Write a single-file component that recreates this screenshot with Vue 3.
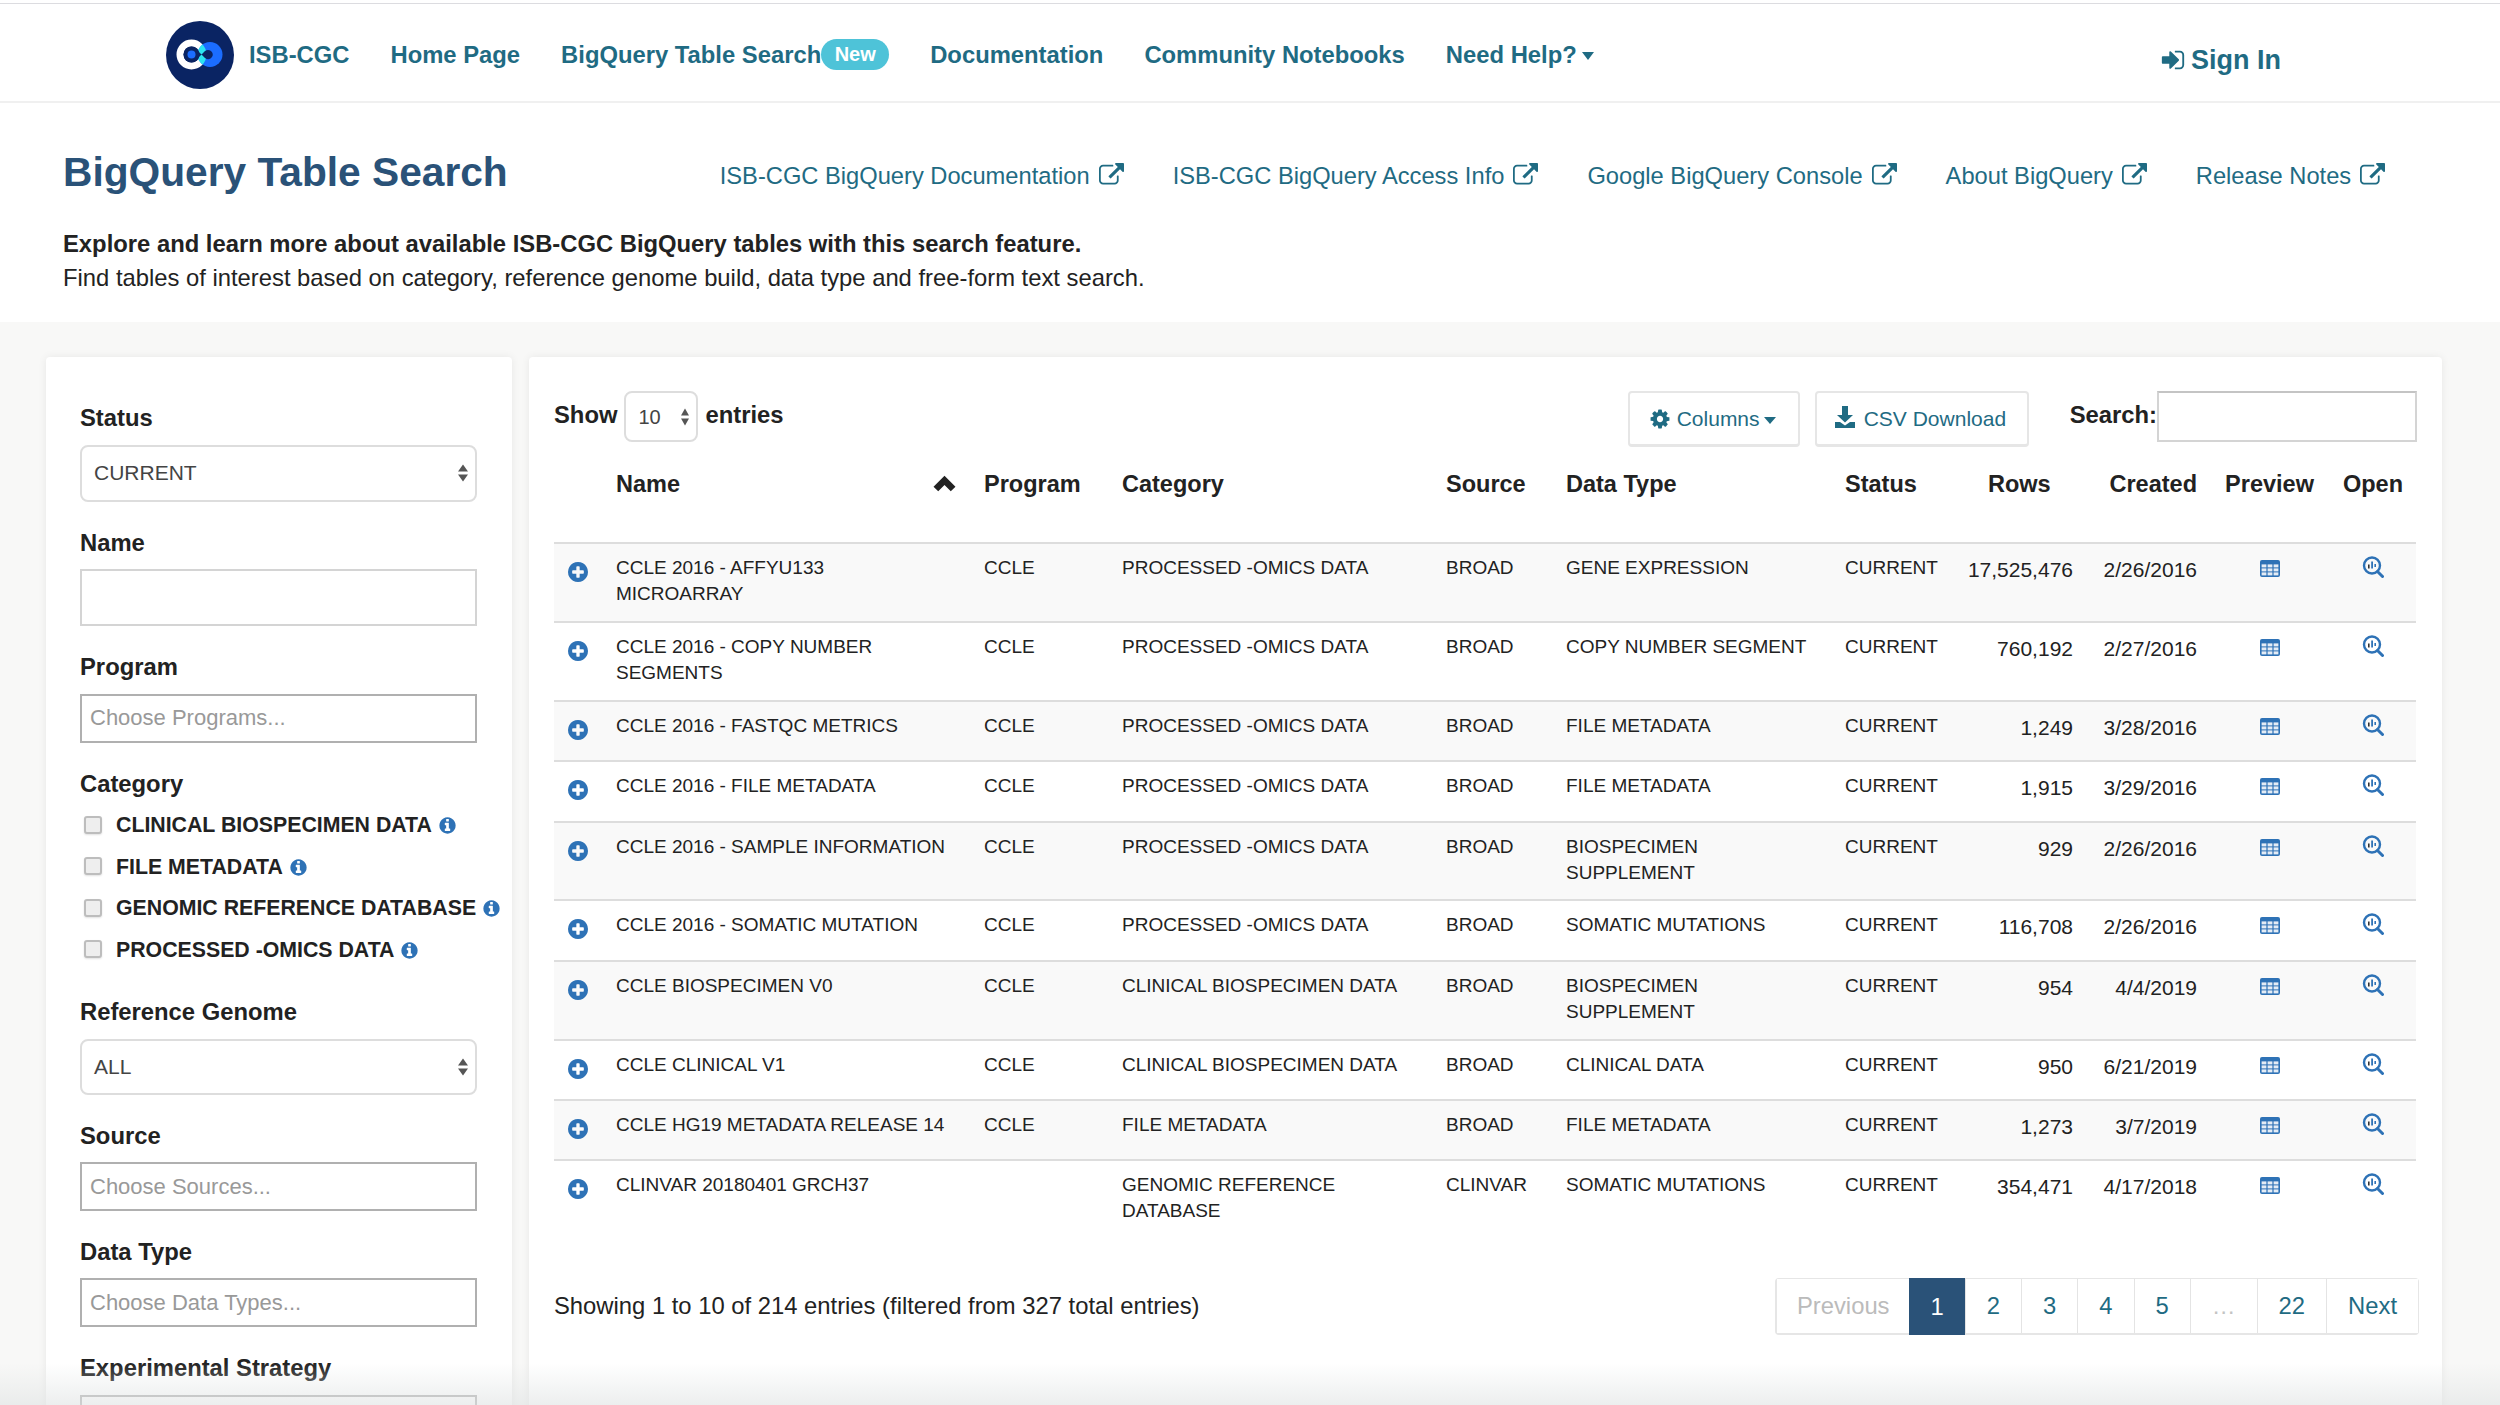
<script setup>
const navLinks = ['Home Page']
const docLinks = [
  'ISB-CGC BigQuery Documentation',
  'ISB-CGC BigQuery Access Info',
  'Google BigQuery Console',
  'About BigQuery',
  'Release Notes'
]
const categories = [
  'CLINICAL BIOSPECIMEN DATA',
  'FILE METADATA',
  'GENOMIC REFERENCE DATABASE',
  'PROCESSED -OMICS DATA'
]
const P = 'PROCESSED -OMICS DATA'
const C = 'CLINICAL BIOSPECIMEN DATA'
const rows = [
  { h: 79, name: 'CCLE 2016 - AFFYU133 MICROARRAY', prog: 'CCLE', cat: P, src: 'BROAD', type: 'GENE EXPRESSION', count: '17,525,476', date: '2/26/2016' },
  { h: 79, name: 'CCLE 2016 - COPY NUMBER SEGMENTS', prog: 'CCLE', cat: P, src: 'BROAD', type: 'COPY NUMBER SEGMENT', count: '760,192', date: '2/27/2016' },
  { h: 60, name: 'CCLE 2016 - FASTQC METRICS', prog: 'CCLE', cat: P, src: 'BROAD', type: 'FILE METADATA', count: '1,249', date: '3/28/2016' },
  { h: 61, name: 'CCLE 2016 - FILE METADATA', prog: 'CCLE', cat: P, src: 'BROAD', type: 'FILE METADATA', count: '1,915', date: '3/29/2016' },
  { h: 78, name: 'CCLE 2016 - SAMPLE INFORMATION', prog: 'CCLE', cat: P, src: 'BROAD', type: 'BIOSPECIMEN SUPPLEMENT', count: '929', date: '2/26/2016' },
  { h: 61, name: 'CCLE 2016 - SOMATIC MUTATION', prog: 'CCLE', cat: P, src: 'BROAD', type: 'SOMATIC MUTATIONS', count: '116,708', date: '2/26/2016' },
  { h: 79, name: 'CCLE BIOSPECIMEN V0', prog: 'CCLE', cat: C, src: 'BROAD', type: 'BIOSPECIMEN SUPPLEMENT', count: '954', date: '4/4/2019' },
  { h: 60, name: 'CCLE CLINICAL V1', prog: 'CCLE', cat: C, src: 'BROAD', type: 'CLINICAL DATA', count: '950', date: '6/21/2019' },
  { h: 60, name: 'CCLE HG19 METADATA RELEASE 14', prog: 'CCLE', cat: 'FILE METADATA', src: 'BROAD', type: 'FILE METADATA', count: '1,273', date: '3/7/2019' },
  { h: 79, name: 'CLINVAR 20180401 GRCH37', prog: '', cat: 'GENOMIC REFERENCE DATABASE', src: 'CLINVAR', type: 'SOMATIC MUTATIONS', count: '354,471', date: '4/17/2018' }
]
const pages = ['2', '3', '4', '5']
const extPath = 'M1408 928v320q0 119-84.5 203.5t-203.5 84.5h-832q-119 0-203.5-84.5t-84.5-203.5v-832q0-119 84.5-203.5t203.5-84.5h704q14 0 23 9t9 23v64q0 14-9 23t-23 9h-704q-66 0-113 47t-47 113v832q0 66 47 113t113 47h832q66 0 113-47t47-113v-320q0-14 9-23t23-9h64q14 0 23 9t9 23zm384-864v512q0 26-19 45t-45 19-45-19l-176-176-652 652q-10 10-23 10t-23-10l-114-114q-10-10-10-23t10-23l652-652-176-176q-19-19-19-45t19-45 45-19h512q26 0 45 19t19 45z'
const infoPath = 'M1152 1376v-160q0-14-9-23t-23-9h-96v-512q0-14-9-23t-23-9h-320q-14 0-23 9t-9 23v160q0 14 9 23t23 9h96v320h-96q-14 0-23 9t-9 23v160q0 14 9 23t23 9h448q14 0 23-9t9-23zm-128-896v-160q0-14-9-23t-23-9h-192q-14 0-23 9t-9 23v160q0 14 9 23t23 9h192q14 0 23-9t9-23zm640 416q0 209-103 385.5t-279.5 279.5-385.5 103-385.5-103-279.5-279.5-103-385.5 103-385.5 279.5-279.5 385.5-103 385.5 103 279.5 279.5 103 385.5z'
const plusPath = 'M1344 960v-128q0-26-19-45t-45-19h-256v-256q0-26-19-45t-45-19h-128q-26 0-45 19t-19 45v256h-256q-26 0-45 19t-19 45v128q0 26 19 45t45 19h256v256q0 26 19 45t45 19h128q26 0 45-19t19-45v-256h256q26 0 45-19t19-45zm320-64q0 209-103 385.5t-279.5 279.5-385.5 103-385.5-103-279.5-279.5-103-385.5 103-385.5 279.5-279.5 385.5-103 385.5 103 279.5 279.5 103 385.5z'
const signPath = 'M1312 896q0 26-19 45l-544 544q-19 19-45 19t-45-19-19-45v-288h-448q-26 0-45-19t-19-45v-384q0-26 19-45t45-19h448v-288q0-26 19-45t45-19 45 19l544 544q19 19 19 45zm352-352v704q0 119-84.5 203.5t-203.5 84.5h-320q-13 0-22.5-9.5t-9.5-22.5q0-4-1-20t-.5-26.5 3-23.5 10-19.5 20.5-6.5h320q66 0 113-47t47-113v-704q0-66-47-113t-113-47h-312l-11.5-1-11.5-3-8-5.5-7-9-2-13.5q0-4-1-20t-.5-26.5 3-23.5 10-19.5 20.5-6.5h320q119 0 203.5 84.5t84.5 203.5z'
const cogPath = 'M1152 896q0-106-75-181t-181-75-181 75-75 181 75 181 181 75 181-75 75-181zm512-109v222q0 12-8 23t-20 13l-185 28q-19 54-39 91 35 50 107 138 10 12 10 25t-9 23q-27 37-99 108t-94 71q-12 0-26-9l-138-108q-44 23-91 38-16 136-29 186-7 28-36 28h-222q-14 0-24.5-8.5t-11.5-21.5l-28-184q-49-16-90-37l-141 107q-10 9-25 9-14 0-25-11-126-114-165-168-7-10-7-23 0-12 8-23 15-21 51-66.5t54-70.5q-27-50-41-99l-183-27q-13-2-21-12.5t-8-23.5v-222q0-12 8-23t19-13l186-28q14-46 39-92-40-57-107-138-10-12-10-24 0-10 9-23 26-36 98.5-107.5t94.5-71.5q13 0 26 10l138 107q44-23 91-38 16-136 29-186 7-28 36-28h222q14 0 24.5 8.5t11.5 21.5l28 184q49 16 90 37l142-107q9-9 24-9 13 0 25 10 129 119 165 170 7 8 7 22 0 12-8 23-15 21-51 66.5t-54 70.5q26 50 41 98l183 28q13 2 21 12.5t8 23.5z'
</script>

<template>
  <div class="page">
    <nav class="nav">
      <svg class="logo" viewBox="0 0 68 68">
        <defs>
          <clipPath id="blueClip"><circle cx="44" cy="33.5" r="12.5" /></clipPath>
        </defs>
        <circle cx="34" cy="34" r="34" fill="#0a2463" />
        <circle cx="25.5" cy="33.5" r="11.5" fill="none" stroke="#fff" stroke-width="7" />
        <circle cx="44" cy="33.5" r="12.5" fill="#1b6dff" />
        <circle cx="25.5" cy="33.5" r="11.5" fill="none" stroke="#2be4f0" stroke-width="7" clip-path="url(#blueClip)" />
        <circle cx="25.5" cy="33.5" r="8" fill="#0a2463" />
        <circle cx="25.5" cy="33.5" r="4" fill="#1b6dff" />
        <path d="M30 28 L39 37 Q43 40 46 36 Q48 33 45 30 Q42 28 39 30 L30 39 Z" fill="#0a2463" />
      </svg>
      <a class="nav-link brand">ISB-CGC</a>
      <a v-for="l in navLinks" :key="l" class="nav-link">{{ l }}</a>
      <span class="nav-badged">
        <a class="nav-link">BigQuery Table Search</a><span class="badge">New</span>
      </span>
      <a class="nav-link">Documentation</a>
      <a class="nav-link">Community Notebooks</a>
      <a class="nav-link">Need Help?<i class="caret nav-caret"></i></a>
      <a class="sign">
        <svg class="sign-icon" viewBox="0 0 1792 1792"><path :d="signPath" fill="currentColor" /></svg>Sign In
      </a>
    </nav>

    <header class="hero">
      <div class="hero-top">
        <h1>BigQuery Table Search</h1>
        <div class="doc-links">
          <a v-for="l in docLinks" :key="l" class="doc-link">
            {{ l }}
            <svg class="ext" viewBox="0 0 1792 1792"><path :d="extPath" fill="currentColor" /></svg>
          </a>
        </div>
      </div>
      <p class="lead"><b>Explore and learn more about available ISB-CGC BigQuery tables with this search feature.</b></p>
      <p class="lead">Find tables of interest based on category, reference genome build, data type and free-form text search.</p>
    </header>

    <section class="content">
      <aside class="filters">
        <div class="group">
          <label class="lab">Status</label>
          <div class="sel sel-tall sel-first">CURRENT<span class="arrows"><i></i><i></i></span></div>
        </div>
        <div class="group">
          <label class="lab">Name</label>
          <div class="box box-name"></div>
        </div>
        <div class="group">
          <label class="lab">Program</label>
          <div class="box box-p dark-b">Choose Programs...</div>
        </div>
        <div class="group">
          <label class="lab lab-cat">Category</label>
          <div v-for="c in categories" :key="c" class="check">
            <span class="cb"></span>
            <span class="check-text">{{ c }}</span>
            <svg class="info" viewBox="0 0 1792 1792"><path :d="infoPath" fill="#2e72b6" /></svg>
          </div>
        </div>
        <div class="group">
          <label class="lab">Reference Genome</label>
          <div class="sel sel-tall">ALL<span class="arrows"><i></i><i></i></span></div>
        </div>
        <div class="group group-tight">
          <label class="lab">Source</label>
          <div class="box box-p dark-b">Choose Sources...</div>
        </div>
        <div class="group">
          <label class="lab">Data Type</label>
          <div class="box box-p dark-b">Choose Data Types...</div>
        </div>
        <div class="group">
          <label class="lab">Experimental Strategy</label>
          <div class="box box-p dark-b"></div>
        </div>
      </aside>

      <main class="results">
        <div class="toolbar">
          <div class="length">
            <b>Show</b>
            <div class="sel sel-small">10<span class="arrows small"><i></i><i></i></span></div>
            <b>entries</b>
          </div>
          <button class="btn btn-col">
            <svg class="btn-icon" viewBox="0 0 1792 1792"><path :d="cogPath" fill="currentColor" /></svg>
            Columns<i class="caret btn-caret"></i>
          </button>
          <button class="btn btn-csv">
            <svg class="btn-icon dl" viewBox="0 0 20 22">
              <path d="M7 0h6v9h5l-8 7.5L2 9h5z" fill="currentColor" />
              <path d="M0 16h5l5 3.5 5-3.5h5v6H0z" fill="currentColor" />
            </svg>
            CSV Download
          </button>
          <b class="search-lab">Search:</b>
          <div class="search-box"></div>
        </div>

        <table class="tbl">
          <colgroup>
            <col style="width: 62px" />
            <col style="width: 368px" />
            <col style="width: 138px" />
            <col style="width: 324px" />
            <col style="width: 120px" />
            <col style="width: 279px" />
            <col style="width: 115px" />
            <col style="width: 125px" />
            <col style="width: 124px" />
            <col style="width: 121px" />
            <col style="width: 86px" />
          </colgroup>
          <thead>
            <tr>
              <th></th>
              <th class="th-name">
                Name
                <svg class="sort" viewBox="0 0 22 16"><path d="M11 0.5 L21.5 11 L17 15.5 L11 9.5 L5 15.5 L0.5 11 Z" fill="#222" /></svg>
              </th>
              <th>Program</th>
              <th>Category</th>
              <th>Source</th>
              <th>Data Type</th>
              <th>Status</th>
              <th class="th-rows">Rows</th>
              <th class="th-created">Created</th>
              <th class="ctr">Preview</th>
              <th class="ctr">Open</th>
            </tr>
          </thead>
          <tbody>
            <tr v-for="r in rows" :key="r.name">
              <td class="c-plus" :style="{ height: r.h + 'px' }">
                <svg class="plus" viewBox="128 128 1536 1536"><path :d="plusPath" fill="#2e72b6" /></svg>
              </td>
              <td class="c-name">{{ r.name }}</td>
              <td>{{ r.prog }}</td>
              <td class="c-cat">{{ r.cat }}</td>
              <td>{{ r.src }}</td>
              <td class="c-type">{{ r.type }}</td>
              <td>CURRENT</td>
              <td class="num">{{ r.count }}</td>
              <td class="num">{{ r.date }}</td>
              <td class="ctr c-prev">
                <svg class="grid" viewBox="0 0 20 17">
                  <rect width="20" height="17" rx="2" fill="#2e72b6" />
                  <g fill="#e4ecf5">
                    <rect x="1.6" y="4.4" width="4.8" height="3" /><rect x="7.6" y="4.4" width="4.8" height="3" /><rect x="13.6" y="4.4" width="4.8" height="3" />
                    <rect x="1.6" y="8.4" width="4.8" height="3" /><rect x="7.6" y="8.4" width="4.8" height="3" /><rect x="13.6" y="8.4" width="4.8" height="3" />
                    <rect x="1.6" y="12.4" width="4.8" height="3" /><rect x="7.6" y="12.4" width="4.8" height="3" /><rect x="13.6" y="12.4" width="4.8" height="3" />
                  </g>
                </svg>
              </td>
              <td class="ctr c-open">
                <svg class="bq" viewBox="0 0 22 22">
                  <circle cx="10" cy="9.5" r="8" fill="none" stroke="#2e72b6" stroke-width="2.4" />
                  <path d="M15.5 15.5 L20.5 20.5" stroke="#2e72b6" stroke-width="3" stroke-linecap="round" />
                  <rect x="6" y="8.5" width="1.6" height="4" fill="#333" />
                  <rect x="9.2" y="5.5" width="1.8" height="7" fill="#2e72b6" />
                  <rect x="12.4" y="8" width="1.6" height="3" fill="#2e72b6" />
                </svg>
              </td>
            </tr>
          </tbody>
        </table>

        <div class="foot">
          <div class="info-text">Showing 1 to 10 of 214 entries (filtered from 327 total entries)</div>
          <div class="pager">
            <span class="pg pg-off">Previous</span>
            <span class="pg pg-on">1</span>
            <span v-for="p in pages" :key="p" class="pg">{{ p }}</span>
            <span class="pg pg-off pg-dots">…</span>
            <span class="pg">22</span>
            <span class="pg">Next</span>
          </div>
        </div>
        <p class="note">Note: for a description of BigQuery tables, see the documentation.</p>
      </main>
    </section>
    <div class="fade"></div>
  </div>
</template>

<style>
html, body { margin: 0; overflow: hidden; background: #fff; }
</style>

<style scoped>
.page {
  position: relative;
  width: 2500px;
  height: 1405px;
  overflow: hidden;
  background: #f8f8f7;
  font-family: "Liberation Sans", Arial, sans-serif;
  font-size: 23.8px;
  color: #222;
}
a { color: #1f6b83; text-decoration: none; }

.nav {
  box-sizing: border-box;
  height: 103px;
  padding: 4px 219px 0 166px;
  display: flex;
  align-items: center;
  gap: 41px;
  background: #fff;
  box-shadow: inset 0 3px 0 #fff, inset 0 4px 0 #dcdce0;
  border-bottom: 2px solid #f0f0f0;
}
.logo { width: 68px; height: 68px; margin-right: -26px; margin-top: 4px; }
.nav-link { font-size: 23.8px; font-weight: 700; line-height: 34px; color: #1f6b83; white-space: nowrap; margin-top: 4px; }
.nav-badged { display: flex; align-items: center; }
.badge {
  box-sizing: border-box;
  width: 68px;
  height: 31px;
  margin-top: 4px;
  border-radius: 16px;
  background: #4ec3d8;
  color: #fff;
  font-size: 20px;
  font-weight: 700;
  line-height: 31px;
  text-align: center;
}
.caret { display: inline-block; width: 0; height: 0; border-style: solid; border-color: currentColor transparent transparent transparent; }
.nav-caret { border-width: 8px 6.5px 0; margin-left: 5px; vertical-align: 3px; }
.sign {
  margin-left: auto;
  display: flex;
  align-items: center;
  font-size: 27px;
  font-weight: 700;
  color: #1f6b83;
  margin-top: 15px;
}
.sign-icon { width: 26px; height: 26px; margin-right: 5px; }

.hero { box-sizing: border-box; background: #fff; padding: 44px 0 0 63px; height: 219px; }
.hero-top { display: flex; align-items: flex-start; }
h1 { margin: 0; font-size: 40.7px; line-height: 50px; font-weight: 700; color: #2a5278; white-space: nowrap; }
.doc-links { display: flex; gap: 49px; margin-left: 212px; margin-top: 12px; }
.doc-link { display: flex; align-items: center; gap: 9px; font-size: 23.7px; line-height: 34px; color: #1f6b83; white-space: nowrap; }
.ext { width: 25px; height: 25px; margin-top: -1px; }
.lead { margin: 0; font-size: 23.8px; line-height: 34px; color: #222; }
.hero-top + .lead { margin-top: 30px; }

.content { display: flex; align-items: flex-start; gap: 17px; padding: 35px 0 0 46px; }
.filters {
  box-sizing: border-box;
  width: 466px;
  height: 1200px;
  padding: 46px 34px 0;
  background: #fff;
  border-radius: 4px;
  box-shadow: 0 0 8px rgba(0, 0, 0, 0.07);
  flex: none;
}
.group { margin-bottom: 26.2px; }
.group-tight { margin-bottom: 25.2px; }
.lab { display: block; font-size: 23.8px; font-weight: 700; line-height: 30px; margin-bottom: 11.5px; color: #222; }
.lab-cat { margin-bottom: 6px; }
.sel {
  box-sizing: border-box;
  position: relative;
  width: 397px;
  border: 2px solid #ddd;
  border-radius: 8px;
  background: #fff;
  color: #444;
  font-size: 21px;
  padding-left: 12px;
  display: flex;
  align-items: center;
}
.sel-tall { height: 56px; }
.sel-first { height: 57px; }
.sel-small { width: 74px; height: 51px; font-size: 20px; padding-left: 12px; margin: 0 7px 0 7px; flex: none; }
.arrows { position: absolute; right: 7px; top: 50%; transform: translateY(-50%); display: flex; flex-direction: column; gap: 3px; }
.arrows i { display: block; width: 0; height: 0; border-left: 5px solid transparent; border-right: 5px solid transparent; }
.arrows i:first-child { border-bottom: 7px solid #555; }
.arrows i:last-child { border-top: 7px solid #555; }
.arrows.small { right: 7px; }
.arrows.small i { border-left-width: 4px; border-right-width: 4px; }
.box {
  box-sizing: border-box;
  width: 397px;
  border: 2px solid #d4d4d4;
  background: #fff;
  font-size: 22px;
  color: #999;
  padding-left: 8px;
  display: flex;
  align-items: center;
}
.box-name { height: 57px; }
.box-p { height: 49px; }
.dark-b { border-color: #b0b0b0; }
.check { display: flex; align-items: center; height: 41.5px; margin-left: 4px; }
.cb {
  box-sizing: border-box;
  flex: none;
  width: 18px;
  height: 18px;
  border: 2px solid #bdbdbd;
  border-radius: 3px;
  background: #eee;
  box-shadow: 0 1px 2px rgba(0, 0, 0, 0.12);
  margin-right: 14px;
  margin-top: -2px;
}
.check-text { flex: none; font-size: 21.3px; font-weight: 700; color: #222; white-space: nowrap; }
.info { width: 19px; height: 19px; margin-left: 6px; flex: none; }

.results {
  box-sizing: border-box;
  width: 1913px;
  height: 1200px;
  padding: 34px 25px 0 25px;
  background: #fff;
  border-radius: 4px;
  box-shadow: 0 0 8px rgba(0, 0, 0, 0.07);
  flex: none;
}
.toolbar { display: flex; align-items: flex-start; height: 56px; }
.length { display: flex; align-items: flex-start; line-height: 48px; margin-right: auto; }
button { font-family: inherit; }
.btn {
  box-sizing: border-box;
  height: 56px;
  border: 2px solid #e6e6e6;
  border-bottom-width: 3px;
  border-radius: 4px;
  background: #fff;
  color: #1f6b83;
  font-size: 21px;
  display: flex;
  align-items: center;
  padding: 0;
}
.btn-col { width: 172px; padding-left: 19px; margin-right: 15px; }
.btn-csv { width: 214px; padding-left: 18px; }
.btn-icon { width: 22px; height: 22px; margin-right: 6px; flex: none; }
.dl { width: 20px; margin-right: 9px; margin-top: -4px; }
.btn-caret { border-width: 7px 6px 0; margin-left: 4px; margin-top: 4px; }
.search-lab { margin-left: 41px; line-height: 48px; }
.search-box { box-sizing: border-box; width: 260px; height: 51px; border: 2px solid #d4d4d4; border-top-color: #c4c4c4; background: #fff; }

.tbl { width: 1862px; table-layout: fixed; border-collapse: separate; border-spacing: 0; }
th {
  box-sizing: border-box;
  height: 95px;
  padding: 22px 0 0;
  vertical-align: top;
  text-align: left;
  font-size: 23.5px;
  line-height: 30px;
  font-weight: 700;
  color: #222;
}
.th-name { position: relative; }
.sort { position: absolute; right: 28px; top: 28px; width: 23px; height: 17px; }
.th-rows { padding-left: 28px; }
.th-created { padding-right: 12px; text-align: right; }
th.ctr { text-align: center; }
td {
  box-sizing: border-box;
  padding: 11px 0 0;
  vertical-align: top;
  border-top: 2px solid #ddd;
  font-size: 19px;
  line-height: 26px;
  color: #222;
}
tbody tr:nth-child(odd) td { background: #f9f9f9; }
.c-plus { padding: 18px 0 0 14px; line-height: 0; }
.plus { width: 20px; height: 20px; }
.c-name { padding-right: 33px; }
.c-cat { padding-right: 34px; }
.c-type { padding-right: 29px; }
.num { text-align: right; padding-right: 12px; font-size: 21px; line-height: 30px; }
.ctr { text-align: center; }
.c-prev { padding: 16px 0 0; line-height: 0; }
.grid { width: 20px; height: 17px; }
.c-open { padding: 12px 0 0; line-height: 0; }
.bq { width: 22px; height: 22px; }

.foot { display: flex; justify-content: space-between; align-items: center; margin-top: 40px; height: 57px; }
.info-text { font-size: 23.8px; color: #222; margin-top: -2px; }
.pager { display: flex; height: 57px; margin-right: -2px; border: 1px solid #e6e6e6; border-left-width: 2px; border-bottom-width: 2px; box-sizing: border-box; border-radius: 4px; }
.pg { padding: 0 21px; line-height: 54px; font-size: 23.8px; color: #1f6b83; border-left: 1px solid #e4e4e4; background: #fff; }
.pg:first-child { border-left: 0; padding: 0 19px 0 20px; }
.pg-off { color: #bbb; }
.pg-dots { color: #c4c4c4; }
.pg-on { background: #2a5278; color: #fff; border-left-color: #2a5278; margin: -1px 0 -2px; line-height: 57px; }
.note { margin: 62px 0 0; font-size: 23.8px; line-height: 34px; color: #777; white-space: nowrap; }

.fade {
  position: absolute;
  left: 0;
  right: 0;
  bottom: 0;
  height: 42px;
  background: linear-gradient(to bottom, rgba(225, 228, 228, 0), rgba(225, 228, 228, 0.62));
  pointer-events: none;
}
</style>
